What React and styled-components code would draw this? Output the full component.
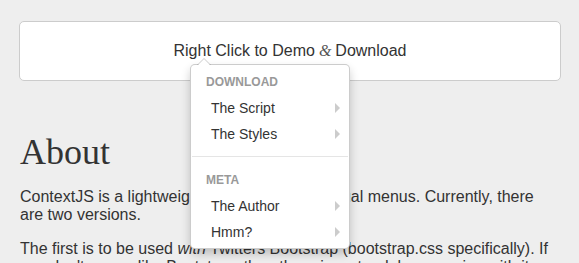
import styled, { createGlobalStyle } from "styled-components";

const Global = createGlobalStyle`
  body {
    margin: 0;
    background: #eeeeee;
    font-family: "Liberation Sans", Arial, sans-serif;
    color: #333;
  }
`

const Page = styled.div`
  position: relative;
  padding: 21px 18px 0 19px;
  height: 263px;
  overflow: hidden;
  box-sizing: border-box;
`

const DemoBox = styled.div`
  height: 60px;
  box-sizing: border-box;
  border: 1px solid #cccccc;
  border-radius: 5px;
  background: #fff;
  display: flex;
  align-items: center;
  justify-content: center;
  font-size: 16px;
  color: #333;
`

const Amp = styled.span`
  font-family: "Liberation Serif", "DejaVu Serif", serif;
  font-style: italic;
  color: #555;
  margin: 0 4px;
`

const Content = styled.div`
  padding-left: 1px;
`

const Heading = styled.h2`
  font-family: "Liberation Serif", "DejaVu Serif", serif;
  font-weight: normal;
  font-size: 36px;
  line-height: 40px;
  margin: 51px 0 16px;
  color: #333;
`

const Para = styled.p`
  font-size: 16px;
  line-height: 18px;
  margin: 0 0 16px;
  color: #333;
`

const Menu = styled.div`
  position: absolute;
  left: 190px;
  top: 64px;
  width: 160px;
  box-sizing: border-box;
  background: #fff;
  border: 1px solid rgba(0, 0, 0, 0.2);
  border-radius: 5px;
  box-shadow: 0 5px 10px rgba(0, 0, 0, 0.2);
  padding: 6px 0 3px;

  &::before {
    content: "";
    position: absolute;
    left: 6px;
    top: -7px;
    border-style: solid;
    border-width: 0 7px 7px;
    border-color: transparent transparent rgba(0, 0, 0, 0.2);
  }

  &::after {
    content: "";
    position: absolute;
    left: 7px;
    top: -6px;
    border-style: solid;
    border-width: 0 6px 6px;
    border-color: transparent transparent #fff;
  }
`

const Header = styled.div`
  height: 22px;
  line-height: 22px;
  padding: 0 15px;
  margin-bottom: 2px;
  font-size: 12px;
  font-weight: bold;
  color: #999;
  text-transform: uppercase;
`

const Item = styled.div`
  position: relative;
  height: 26px;
  line-height: 26px;
  padding-left: 20px;
  font-size: 14px;
  color: #333;

  &::after {
    content: "";
    position: absolute;
    right: 9px;
    top: 8px;
    border-style: solid;
    border-width: 5px 0 5px 5px;
    border-color: transparent transparent transparent #cccccc;
  }
`

const Divider = styled.div`
  height: 1px;
  background: #e5e5e5;
  margin: 9px 1px 12px;
`

export default function App() {
  return (
    <>
      <Global />
      <Page>
        <DemoBox>
          Right Click to Demo<Amp>&amp;</Amp>Download
        </DemoBox>
        <Content>
          <Heading>About</Heading>
          <Para>
            ContextJS is a lightweight solution for contextual menus. Currently, there are two versions.
          </Para>
          <Para>
            The first is to be used <em>with</em> Twitters Bootstrap (bootstrap.css specifically). If
            you don't use or like Bootstrap, then there is a standalone version with its own styles.
          </Para>
        </Content>
        <Menu>
          <Header>Download</Header>
          <Item>The Script</Item>
          <Item>The Styles</Item>
          <Divider />
          <Header>Meta</Header>
          <Item>The Author</Item>
          <Item>Hmm?</Item>
        </Menu>
      </Page>
    </>
  );
}
